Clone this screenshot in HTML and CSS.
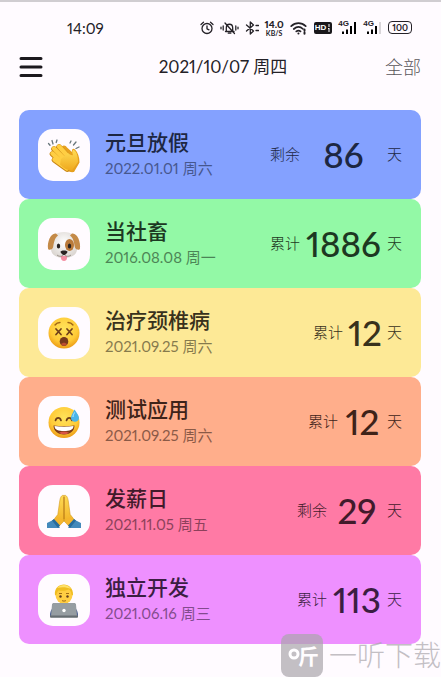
FILE: index.html
```html
<!DOCTYPE html>
<html lang="zh-CN">
<head>
<meta charset="utf-8">
<meta name="viewport" content="width=device-width, initial-scale=1">
<title>2021/10/07 周四</title>
<link rel="stylesheet" href="styles.css">
</head>
<body>
<div class="app">
  <div class="status">
    <span class="clock">14:09</span>
    <div class="indicators">
      <svg width="14" height="14" viewBox="0 0 14 14" class="line"><circle cx="7" cy="7.5" r="5"/><path d="M1 3.5 3.5 1.3M13 3.5 10.5 1.3M7 4.8v3l2 1"/></svg>
      <svg width="19" height="14" viewBox="0 0 19 14" class="line"><path d="M5.5 10.5h8.5M6.3 10V7c0-5 6.4-5 6.4 0v3M8.3 12.2h2.5M5 2l9.5 10.5M3.2 5v4M1 6.2v1.6M15.8 5v4M18 6.2v1.6"/></svg>
      <svg width="14" height="14" viewBox="0 0 14 14" class="line"><path d="m1.5 4 7 6-3.2 3V1l3.2 3-7 6M11 4.5h2.5M11 9.5h2.5"/></svg>
      <span class="speed"><b>14.0</b><span>KB/S</span></span>
      <svg width="18" height="14" viewBox="0 0 18 14" class="line"><path d="M1.2 5.2c4.200-4 10.300-4 14.500 0M3.800 8c3-2.600 6.400-2.600 9.200 0M6.300 10.400c1.500-1.200 2.800-1.200 4.200 0" stroke-width="1.700"/><path d="M8.400 12.500h.1M14.500 8.500v1.300M14.500 11.500v1.300" stroke-width="2"/></svg>
      <span class="hd">HD<svg width="4" height="8" viewBox="0 0 4 8"><path d="M2 0v3M1 5l1-1v4" stroke="#fff" fill="none"/></svg></span>
      <span class="signal"><span>4G</span><svg width="19" height="13" viewBox="0 0 19 13"><path d="M4 10.500h2V13H4zM8 8.500h2V13H8zM12 5h2v8h-2zM16 1h2v12h-2z"/></svg></span>
      <span class="signal"><span>4G</span><svg width="19" height="13" viewBox="0 0 19 13"><path d="M4 10.500h2V13H4zM8 8.500h2V13H8zM12 5h2v8h-2z"/><path d="M16 1h2v12h-2z" opacity=".15"/></svg></span>
      <span class="battery">100</span>
    </div>
  </div>

  <header class="topbar">
    <button class="menu" type="button" aria-label="菜单"><svg width="24" height="22" viewBox="0 0 24 22"><path d="M2 2.500h20M2 11h20M2 19.500h20"/></svg></button>
    <h1 class="today">2021/10/07 周四</h1>
    <button class="all" type="button">全部</button>
  </header>

  <ul class="events">
    <li class="event blue">
      <svg class="tile" viewBox="0 0 52 52">
        <defs>
          <linearGradient id="skin" x1="0" y1="0" x2="0" y2="1"><stop offset="0" stop-color="#ffdc55"/><stop offset="1" stop-color="#efa81d"/></linearGradient>
          <radialGradient id="face" cx=".5" cy=".35" r=".68"><stop offset="0" stop-color="#ffe35b"/><stop offset=".65" stop-color="#ffca36"/><stop offset="1" stop-color="#e99413"/></radialGradient>
          <radialGradient id="fur" cx=".5" cy=".4" r=".65"><stop offset="0" stop-color="#fff"/><stop offset="1" stop-color="#d8d2cd"/></radialGradient>
        </defs>
        <path d="M24 17.500c1.500-2 4-1 5 1l5 4.500c-.5-3 1.500-4 3-2.500 3 3 4.500 8 4.500 13L36 43c-5 1-11-3-15-7z" fill="#e6a01e"/>
        <g fill="none" stroke-linecap="round"><path d="m21 18 11 12M16 20l13 13M14.500 25l13 12M16.500 31 29 40" stroke="#c98615" stroke-width="5.600"/><path d="m21 17.500 11 12M16 19.500l13 13M14.500 24.500l13 12M16.500 30.500 29 39.500" stroke="#ffce43" stroke-width="4.300"/></g>
        <path d="m23 30 7-6c1 1 4 3 5 2-1-3-1-5 1-5 3 2 4 7 4 12l-6 8.500c-5 0-9-3-12-6z" fill="url(#skin)"/>
        <g fill="none" stroke="#69777c" stroke-width="1.300" stroke-linecap="round"><path d="m10.500 14.500 1.500 1.700M14 11.500l1 3.500M19 11l-.8 2.500M32 14l1-2M35.500 16l2.500-3M38 19.500l3-1.500"/></g>
      </svg>
      <div class="info"><h2>元旦放假</h2><time datetime="2022-01-01">2022.01.01 周六</time></div>
      <p class="count"><span>剩余</span><strong class="w-xl">86</strong><span>天</span></p>
    </li>
    <li class="event green">
      <svg class="tile" viewBox="0 0 52 52">
        <path d="M17 17c3-4 15-4 18 0 3 4 4 10 4 14 0 6-6 9-13 9s-13-3-13-9c0-4 1-10 4-14z" fill="url(#fur)"/>
        <path d="M18 15.500c-5-1-9 8-8 15 .2 2 4 1.500 5-1 1-4 1-9 5-12zM34 15.500c5-1 9 8 8 15-.2 2-4 1.500-5-1-1-4-1-9-5-12z" fill="#c48a48"/>
        <ellipse cx="31.500" cy="27" rx="4.500" ry="6" fill="#b97a3a"/>
        <ellipse cx="20.500" cy="28" rx="1.700" ry="2.500" fill="#272220"/><ellipse cx="31.500" cy="28" rx="1.700" ry="2.500" fill="#272220"/>
        <path d="M23 38h6v2c0 4-6 4-6 0z" fill="#f48da2"/>
        <path d="M19 37c3 2.500 6 1 7-1 1 2 4 3.500 7 1" fill="none" stroke="#8c817b" stroke-width=".8"/>
        <path d="M22.500 33.500c1-1.500 6-1.500 7 0 0 1.500-2 3.500-3.500 3.500s-3.500-2-3.500-3.500z" fill="#292322"/>
      </svg>
      <div class="info"><h2>当社畜</h2><time datetime="2016-08-08">2016.08.08 周一</time></div>
      <p class="count"><span>累计</span><strong class="w-xl">1886</strong><span>天</span></p>
    </li>
    <li class="event yellow">
      <svg class="tile" viewBox="0 0 52 52">
        <circle cx="26" cy="26" r="15.500" fill="url(#face)"/>
        <path d="m18 22 5 5.500m0-5.500-5 5.500M29 22l5 5.500m0-5.500-5 5.500" fill="none" stroke="#714019" stroke-width="1.700" stroke-linecap="round"/>
        <path d="M17 18c1.500-2 3-2.500 5-2.500M30 15.500c2 0 3.500.5 5 2.500" fill="none" stroke="#a06616" stroke-width="1.300" stroke-linecap="round"/>
        <ellipse cx="26" cy="34.500" rx="4.300" ry="4.500" fill="#77391b"/><path d="M23 37.300c1.500-2 4.500-2 6 0-1.500 2-4.500 2-6 0z" fill="#bd4d31"/>
      </svg>
      <div class="info"><h2>治疗颈椎病</h2><time datetime="2021-09-25">2021.09.25 周六</time></div>
      <p class="count"><span>累计</span><strong class="w-s">12</strong><span>天</span></p>
    </li>
    <li class="event orange">
      <svg class="tile" viewBox="0 0 52 52">
        <circle cx="26" cy="26.500" r="15.500" fill="url(#face)"/>
        <path d="M17.500 24.500c1-3.500 4.500-3.500 5.500 0M28.500 24.500c1-3.500 4.500-3.500 5.500 0" fill="none" stroke="#714019" stroke-width="1.700" stroke-linecap="round"/>
        <path d="M15.500 29.500c6 1 15 1 21 0 0 12-21 12-21 0z" fill="#7c3a16"/><path d="M16.500 30c6 1 13 1 19 0 0 4-4 5-9.500 5s-9.500-1-9.500-5z" fill="#fff"/><path d="M21 36.700c3-1.500 7-1.500 10 0-3 2-7 2-10 0z" fill="#d95544"/>
        <path d="M36.500 13.500c2 3 4.500 6 4.500 8.500 0 5-8 5-8 0 0-2.500 2-5.500 3.500-8.500z" fill="#49b4e8"/><path d="M35 21c0-2 1-3 1.500-4.500" fill="none" stroke="#b6ebff"/>
      </svg>
      <div class="info"><h2>测试应用</h2><time datetime="2021-09-25">2021.09.25 周六</time></div>
      <p class="count"><span>累计</span><strong class="w-m">12</strong><span>天</span></p>
    </li>
    <li class="event pink">
      <svg class="tile" viewBox="0 0 52 52">
        <path d="M25.800 10.500c-2-1-3.500 2-4 5l-2 14-5.500 7 5 6.500 6.700-7zM26.200 10.500c2-1 3.500 2 4 5l2 14 5.500 7-5 6.500-6.700-7z" fill="url(#skin)" stroke="#d39a20" stroke-width=".6"/>
        <path d="M26 12v22" stroke="#b97815" stroke-width=".9"/>
        <path d="m20 32 5.500 4-5.500 6-6-5zM32 32l-5.500 4 5.500 6 6-5z" fill="#f5b52e"/>
        <path d="m9 38 7-3.500 6 8.500H9zM43 38l-7-3.500-6 8.500h13z" fill="#4489bb"/><path d="m14 35.500 2-1.500 6 6.500-2 2.500zM38 35.500 36 34l-6 6.500 2 2.500z" fill="#286b9c"/>
      </svg>
      <div class="info"><h2>发薪日</h2><time datetime="2021-11-05">2021.11.05 周五</time></div>
      <p class="count"><span>剩余</span><strong class="w-l">29</strong><span>天</span></p>
    </li>
    <li class="event purple">
      <svg class="tile" viewBox="0 0 52 52">
        <path d="M13 43c-2 0-1-8 3-10l6-2h8l6 2c4 2 5 10 3 10z" fill="#4c5f91"/>
        <path d="M22 27h8v6h-8z" fill="#e2a426"/>
        <ellipse cx="26" cy="21" rx="8.500" ry="9" fill="#ffcd43"/>
        <path d="M17 21.500c-2-14 19-15 18 0l-1.500-1c0-3-2-5-3-5-4 2-8 1-10 1-1 1-2 3-2 4z" fill="#f0bd20"/><path d="M19 14c4-4 11-4 14 1-5-2-9-2-14-1z" fill="#ffe169"/>
        <circle cx="22.500" cy="22.500" r="1.200" fill="#623c1f"/><circle cx="29.500" cy="22.500" r="1.200" fill="#623c1f"/><path d="M21 19.500h3M28 19.500h3M24 26.500c1 .8 3 .8 4 0" fill="none" stroke="#a36c12"/>
        <path d="M14 30.500c0-1 1-1.500 2-1.500h20c1 0 2 .5 2 1.500L39 42H13z" fill="#969da2"/><path d="M12 41.500h28V43q0 .8-1 .8H13q-1 0-1-.8z" fill="#666d72"/><circle cx="26" cy="36.500" r="1.700" fill="#fff"/>
      </svg>
      <div class="info"><h2>独立开发</h2><time datetime="2021-06-16">2021.06.16 周三</time></div>
      <p class="count"><span>累计</span><strong class="w-l">113</strong><span>天</span></p>
    </li>
  </ul>

  <div class="watermark">
    <svg width="42" height="43" viewBox="0 0 42 43"><rect width="42" height="43" rx="8"/><circle cx="13" cy="20" r="4"/><text x="17" y="30">斤</text></svg>
    <span>一听下载</span>
  </div>
</div>
</body>
</html>
```
FILE: styles.css
```css
* { box-sizing: border-box; }

body {
  margin: 0;
  background: #fffbff;
  color: #242127;
  font-family: Lato, "Noto Sans CJK SC", sans-serif;
  font-variant-numeric: proportional-nums;
}

h1, h2, p, ul { margin: 0; padding: 0; }
button { padding: 0; border: 0; background: none; color: inherit; font: inherit; }
svg { display: block; flex: none; }

.app {
  position: relative;
  min-height: 100vh;
  padding: 0 20px 0 19px;
  border-top: 2px solid #d0cdd1;
  overflow: hidden;
}

.status {
  display: flex;
  align-items: center;
  justify-content: space-between;
  height: 51px;
  padding: 0 9px 0 48px;
}
.clock { font-size: 15px; }
.indicators { display: flex; align-items: center; gap: 6px; }
.line { fill: none; stroke: #242127; stroke-width: 1.3; stroke-linecap: round; stroke-linejoin: round; }
.speed { display: flex; flex-direction: column; align-items: center; font-size: 7px; line-height: 8px; font-weight: 700; }
.speed b { font-size: 10px; line-height: 10px; }
.hd {
  display: flex;
  align-items: center;
  gap: 1px;
  height: 12px;
  padding: 0 1px;
  border-radius: 2px;
  background: #19171b;
  color: #fff;
  font: 700 8px "Liberation Sans", sans-serif;
}
.signal { position: relative; font: 700 8px/8px "Liberation Sans", sans-serif; }
.signal span { position: absolute; left: 0; top: -1px; }
.battery {
  height: 13px;
  padding: 0 3px;
  border: 1px solid #242127;
  border-radius: 4px;
  font-size: 9px;
  line-height: 11px;
  font-weight: 700;
}

.topbar {
  display: grid;
  grid-template-columns: 1fr auto 1fr;
  align-items: center;
  height: 28px;
}
.menu { justify-self: start; }
.menu path { stroke: #1c191e; stroke-width: 3; stroke-linecap: round; }
.today { padding-left: 6px; font-size: 17px; font-weight: 400; line-height: 28px; }
.all { justify-self: end; color: #59565b; font-size: 18px; font-weight: 300; line-height: 28px; }

.events { margin-top: 29px; list-style: none; }
.event {
  display: flex;
  align-items: center;
  min-height: 89px;
  padding: 0 19px;
  border-radius: 10px;
}
.blue { background: #84a1ff; color: #1d2743; }
.green { background: #93f9a6; color: #1d3822; }
.yellow { background: #fde996; color: #38311c; }
.orange { background: #ffae8b; color: #3e2319; }
.pink { background: #ff7aa5; color: #421a2b; }
.purple { background: #ee90ff; color: #3b1e42; }

.tile { width: 52px; height: 52px; border-radius: 15px; background: #fffbff; }
.info { flex: 1; margin-left: 15px; padding-bottom: 2px; white-space: nowrap; }
.info h2 { font-size: 21px; font-weight: 500; line-height: 28px; }
.info time { display: block; font-size: 15px; line-height: 24px; opacity: .6; }
.count { display: flex; align-items: center; padding-bottom: 2px; font-size: 15px; font-weight: 300; }
.count strong { font-size: 35px; line-height: 44px; font-weight: 500; text-align: center; }
.w-s { width: 44px; }
.w-m { width: 49px; }
.w-l { width: 60px; }
.w-xl { width: 87px; }

.watermark {
  position: absolute;
  right: 0;
  bottom: 0;
  display: flex;
  align-items: center;
  gap: 6px;
  color: #aaa6ac;
  font-size: 28px;
  font-weight: 300;
  line-height: 43px;
  opacity: .7;
}
.watermark rect { fill: #aaa6ac; }
.watermark circle { fill: none; stroke: #fff; stroke-width: 3; }
.watermark text { fill: #fff; font-size: 21px; font-weight: 700; }
```
